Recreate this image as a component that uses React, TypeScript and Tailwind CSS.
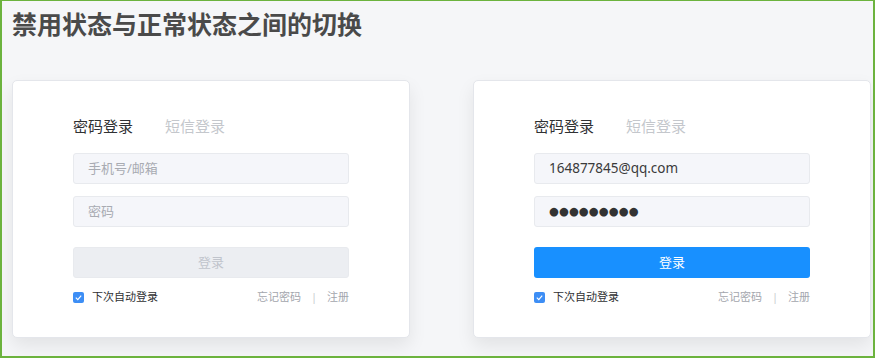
import React from "react";

const font = { fontFamily: '"Noto Sans", "Noto Sans CJK SC", sans-serif' };

function Card({ enabled }: { enabled: boolean }) {
  return (
    <div className="w-[398px] h-[258px] bg-white border border-[#e4e6eb] rounded-[5px] shadow-[0_8px_18px_rgba(0,0,0,0.08)] px-[60px] pt-[35px]">
      <div className="flex gap-[32px] h-[20px] items-center text-[15px] leading-[20px]">
        <span className="text-[#303133]">密码登录</span>
        <span className="text-[#c4c7cc]">短信登录</span>
      </div>
      <div className="mt-[17px] h-[31px] rounded-[3px] border border-[#e8eaee] bg-[#f5f6fa] flex items-center pl-[14px]">
        {enabled ? (
          <span className="text-[13.5px] text-[#3a3a3a]">164877845@qq.com</span>
        ) : (
          <span className="text-[13px] text-[#a8abb2]">手机号/邮箱</span>
        )}
      </div>
      <div className="mt-[12px] h-[31px] rounded-[3px] border border-[#e8eaee] bg-[#f5f6fa] flex items-center pl-[14px]">
        {enabled ? (
          <span
            className="text-[11.3px] text-[#333] leading-none tracking-[0.1px]"
            style={{ fontFamily: '"DejaVu Sans", sans-serif' }}
          >
            ●●●●●●●●●
          </span>
        ) : (
          <span className="text-[13px] text-[#a8abb2]">密码</span>
        )}
      </div>
      <div
        className={
          enabled
            ? "mt-[20px] h-[31px] rounded-[3px] bg-[#1890ff] flex items-center justify-center text-[13px] text-white"
            : "mt-[20px] h-[31px] rounded-[3px] bg-[#eceef2] border border-[#e8eaee] flex items-center justify-center text-[13px] text-[#c0c4cc]"
        }
      >
        登录
      </div>
      <div className="mt-[12px] h-[14px] flex items-center justify-between text-[11px] leading-[14px]">
        <div className="flex items-center gap-[8px]">
          <span className="w-[11px] h-[11px] rounded-[2px] bg-[#3d8ef5] flex items-center justify-center">
            <svg width="9" height="9" viewBox="0 0 10 10">
              <path d="M2 5.2 L4.2 7.3 L8 3" fill="none" stroke="white" strokeWidth="1.3" />
            </svg>
          </span>
          <span className="text-[#303133]">下次自动登录</span>
        </div>
        <div className="flex items-center text-[#a3a6ad]">
          <span>忘记密码</span>
          <span className="mx-[10px] text-[#c8cbd0]">|</span>
          <span>注册</span>
        </div>
      </div>
    </div>
  );
}

export default function App() {
  return (
    <div
      className="w-[875px] h-[358px] bg-[#f5f6f8] border-t border-l-2 border-r-2 border-b-2 border-[#6cb33e] overflow-hidden"
      style={font}
    >
      <div className="pl-[10px] pt-[5px] text-[25px] leading-[36px] font-bold text-[#4a4a4a]">
        禁用状态与正常状态之间的切换
      </div>
      <div className="flex gap-[63px] pl-[10px] mt-[38px]">
        <Card enabled={false} />
        <Card enabled={true} />
      </div>
    </div>
  );
}
